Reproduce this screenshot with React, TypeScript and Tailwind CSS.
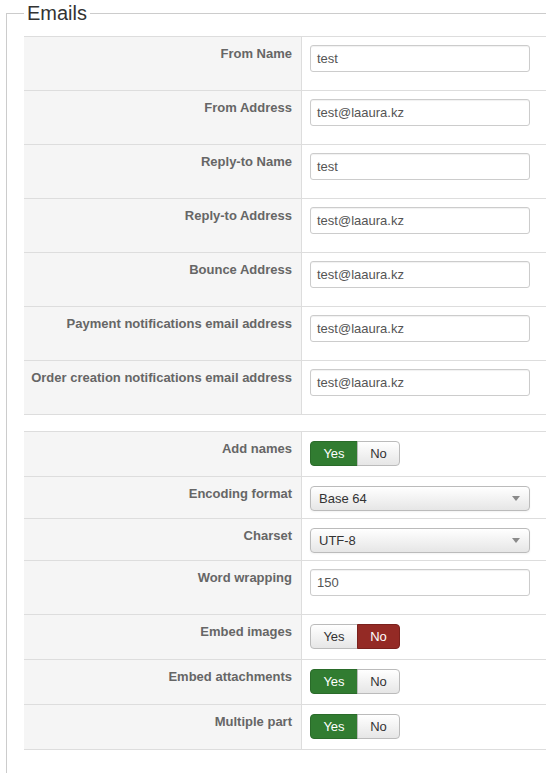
import React from "react";

type Field =
  | { kind: "text"; label: string; value: string }
  | { kind: "select"; label: string; value: string }
  | { kind: "toggle"; label: string; on: boolean };

const addressFields: Field[] = [
  { kind: "text", label: "From Name", value: "test" },
  { kind: "text", label: "From Address", value: "test@laaura.kz" },
  { kind: "text", label: "Reply-to Name", value: "test" },
  { kind: "text", label: "Reply-to Address", value: "test@laaura.kz" },
  { kind: "text", label: "Bounce Address", value: "test@laaura.kz" },
  { kind: "text", label: "Payment notifications email address", value: "test@laaura.kz" },
  { kind: "text", label: "Order creation notifications email address", value: "test@laaura.kz" },
];

const optionFields: Field[] = [
  { kind: "toggle", label: "Add names", on: true },
  { kind: "select", label: "Encoding format", value: "Base 64" },
  { kind: "select", label: "Charset", value: "UTF-8" },
  { kind: "text", label: "Word wrapping", value: "150" },
  { kind: "toggle", label: "Embed images", on: false },
  { kind: "toggle", label: "Embed attachments", on: true },
  { kind: "toggle", label: "Multiple part", on: true },
];

function TextInput({ value }: { value: string }) {
  return (
    <div className="flex h-[27px] w-[220px] items-center rounded-[3px] border border-[#cccccc] bg-white px-[6px] text-[13px] text-[#555555] shadow-[inset_0_1px_1px_rgba(0,0,0,0.06)]">
      {value}
    </div>
  );
}

function SelectBox({ value }: { value: string }) {
  return (
    <div className="flex h-[25px] w-[220px] items-center justify-between rounded-[4px] border border-[#bbbbbb] bg-gradient-to-b from-white to-[#e6e6e6] pl-[8px] pr-[9px] text-[13px] text-[#333333] shadow-[0_1px_2px_rgba(0,0,0,0.05)]">
      <span>{value}</span>
      <svg width="8" height="5" viewBox="0 0 8 5">
        <path d="M0 0 L8 0 L4 5 Z" fill="#8a8a8a" />
      </svg>
    </div>
  );
}

function YesNo({ on }: { on: boolean }) {
  const plain =
    "border-[#bbbbbb] bg-gradient-to-b from-white to-[#e6e6e6] text-[#333333]";
  return (
    <div className="flex h-[25px] text-[13px]">
      <span
        className={`flex w-[48px] items-center justify-center rounded-l-[4px] border ${
          on ? "border-[#2a6b2a] bg-[#317c31] text-white" : plain
        }`}
      >
        Yes
      </span>
      <span
        className={`-ml-px flex w-[43px] items-center justify-center rounded-r-[4px] border ${
          on ? plain : "border-[#7a211d] bg-[#942a25] text-white"
        }`}
      >
        No
      </span>
    </div>
  );
}

function Row({ field }: { field: Field }) {
  const height =
    field.kind === "text" ? "h-[54px]" : field.kind === "select" ? "h-[42px]" : "h-[45px]";
  const top = field.kind === "text" ? "pt-[8px]" : "pt-[9px]";
  return (
    <div className={`flex border-t border-[#dddddd] ${height}`}>
      <div className="w-[278px] shrink-0 border-r border-[#dddddd] bg-[#f5f5f5] pr-[9px] pt-[8px] text-right text-[13px] font-bold leading-[18px] text-[#666666]">
        {field.label}
      </div>
      <div className={`flex-1 pl-[8px] ${top}`}>
        {field.kind === "text" && <TextInput value={field.value} />}
        {field.kind === "select" && <SelectBox value={field.value} />}
        {field.kind === "toggle" && <YesNo on={field.on} />}
      </div>
    </div>
  );
}

export default function App() {
  return (
    <div
      className="h-[773px] overflow-hidden bg-white"
      style={{ fontFamily: '"Liberation Sans", Arial, sans-serif' }}
    >
      <fieldset className="ml-[6px] min-h-[800px] border-l border-t border-[#cccccc] pl-[17px]">
        <legend className="px-[3px] text-[20px] leading-[26px] text-[#333333]">Emails</legend>
        <div className="mt-[10px] border-b border-[#dddddd]">
          {addressFields.map((f) => (
            <Row key={f.label} field={f} />
          ))}
        </div>
        <div className="mt-[16px] border-b border-[#dddddd]">
          {optionFields.map((f) => (
            <Row key={f.label} field={f} />
          ))}
        </div>
      </fieldset>
    </div>
  );
}
